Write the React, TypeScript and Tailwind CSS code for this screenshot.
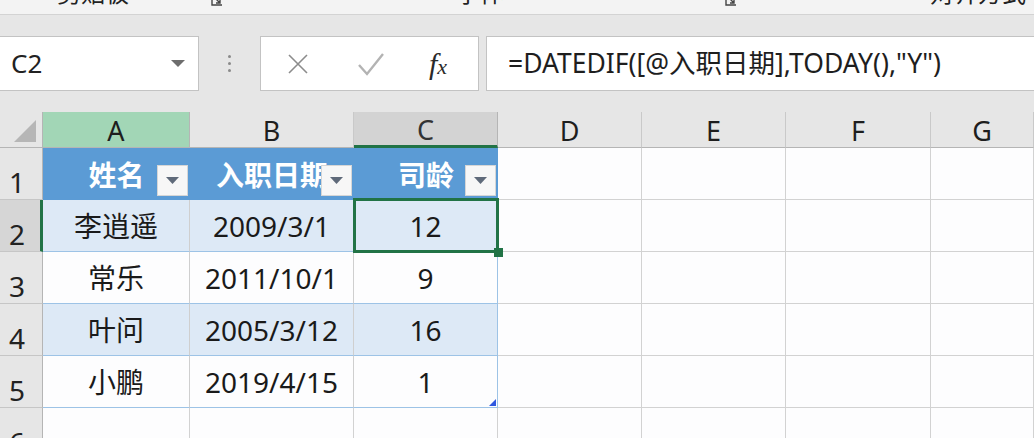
import React from "react";

const font = { fontFamily: '"Noto Sans", "Noto Sans CJK SC", sans-serif' };

const columns = ["A", "B", "C", "D", "E", "F", "G"];

const rows = [
  { name: "李逍遥", date: "2009/3/1", years: "12", band: true },
  { name: "常乐", date: "2011/10/1", years: "9", band: false },
  { name: "叶问", date: "2005/3/12", years: "16", band: true },
  { name: "小鹏", date: "2019/4/15", years: "1", band: false },
];

function Launcher() {
  return (
    <svg width="12" height="12" viewBox="0 0 12 12" className="mt-[-6px]">
      <path d="M1 1v10h10" fill="none" stroke="#444" strokeWidth="1.4" />
      <path d="M4 4l5 5M9 5v4H5" fill="none" stroke="#444" strokeWidth="1.4" />
    </svg>
  );
}

function FilterButton() {
  return (
    <span className="absolute right-[2px] bottom-[3px] grid h-[31px] w-[31px] place-items-center border border-[#d6d6d6] bg-[#f7f7f7]">
      <svg width="13" height="7" viewBox="0 0 13 7">
        <path d="M0 0h13L6.5 7z" fill="#5f6a7a" />
      </svg>
    </span>
  );
}

function ColHeader({ letter }: { letter: string }) {
  const base = "flex items-center justify-center pt-[3px] text-[27px] text-[#1e1e1e]";
  if (letter === "A")
    return <div className={`${base} border-b border-r border-[#b5b5b5] bg-[#a2d6b6]`}>{letter}</div>;
  if (letter === "C")
    return (
      <div className={`${base} border-b-[3px] border-r border-b-[#217346] border-r-[#b5b5b5] bg-[#d3d3d3] text-[#333]`}>
        {letter}
      </div>
    );
  return <div className={`${base} border-b border-r border-b-[#b5b5b5] border-r-[#c9c9c9] bg-[#e6e6e6]`}>{letter}</div>;
}

function RowHeader({ n, selected }: { n: number; selected?: boolean }) {
  return (
    <div
      className={`flex items-end pb-[1px] pl-[9px] text-[28px] leading-none text-[#222] border-b border-[#c6c6c6] ${
        selected ? "border-r-[3px] border-r-[#217346] bg-[#d6d6d6]" : "border-r border-r-[#b5b5b5] bg-[#e6e6e6]"
      }`}
    >
      <span className="pb-[2px]">{n}</span>
    </div>
  );
}

function Empty() {
  return <div className="border-b border-r border-[#d2d2d2] bg-[#fdfdfe]" />;
}

export default function App() {
  return (
    <div style={font} className="h-[438px] w-[1034px] overflow-hidden bg-[#e6e6e6]">
      {/* ribbon group labels, cut off at the top */}
      <div className="relative flex h-[15px] items-start overflow-hidden border-b border-[#d3d3d3] bg-[#f3f3f3] text-[24px] leading-none text-[#222]">
        <span className="ml-[57px] mt-[-19px]">剪贴板</span>
        <span className="ml-[82px]"><Launcher /></span>
        <span className="ml-[233px] mt-[-19px]">字体</span>
        <span className="ml-[221px]"><Launcher /></span>
        <span className="ml-[193px] mt-[-19px]">对齐方式</span>
      </div>

      {/* formula bar */}
      <div className="flex h-[97px] items-start pt-[21px]">
        <div className="ml-[-1px] flex h-[55px] w-[200px] items-center justify-between border border-[#c3c3c3] bg-white pl-[11px] pr-[13px]">
          <span className="text-[26px] text-[#222]">C2</span>
          <svg width="14" height="7" viewBox="0 0 14 7">
            <path d="M0 0h14L7 7z" fill="#6d6d6d" />
          </svg>
        </div>
        <div className="flex h-[55px] w-[61px] flex-col items-center justify-center gap-[4px]">
          <span className="h-[3px] w-[3px] rounded-full bg-[#8a8a8a]" />
          <span className="h-[3px] w-[3px] rounded-full bg-[#8a8a8a]" />
          <span className="h-[3px] w-[3px] rounded-full bg-[#8a8a8a]" />
        </div>
        <div className="flex h-[55px] w-[219px] items-center border border-[#c3c3c3] bg-white">
          <svg width="22" height="20" viewBox="0 0 22 20" className="ml-[26px]">
            <path d="M2 1l18 18M20 1L2 19" stroke="#8c8c8c" strokeWidth="1.6" />
          </svg>
          <svg width="28" height="24" viewBox="0 0 28 24" className="ml-[48px]">
            <path d="M2 13l8 9L26 2" fill="none" stroke="#b3b3b3" strokeWidth="2.4" />
          </svg>
          <span
            className="ml-[44px] text-[30px] italic leading-none text-[#2a2a2a]"
            style={{ fontFamily: '"Liberation Serif", serif' }}
          >
            f<span className="text-[22px]">x</span>
          </span>
        </div>
        <div className="ml-[7px] flex h-[55px] flex-1 items-center border border-r-0 border-[#c3c3c3] bg-white pl-[21px] text-[26.5px] text-[#1e1e1e]">
          =DATEDIF([@入职日期],TODAY(),"Y")
        </div>
      </div>

      {/* sheet */}
      <div className="grid grid-cols-[43px_147px_164px_144px_144px_144px_145px_1fr] grid-rows-[36px_52px_52px_52px_52px_52px_52px] bg-[#fdfdfe]">
        <div className="flex items-end justify-end border-b border-r border-[#b5b5b5] bg-[#e6e6e6] pb-[5px] pr-[6px]">
          <svg width="22" height="22" viewBox="0 0 22 22">
            <path d="M22 0v22H0z" fill="#b6b6b6" />
          </svg>
        </div>
        {columns.map((c) => (
          <ColHeader key={c} letter={c} />
        ))}

        <RowHeader n={1} />
        {["姓名", "入职日期", "司龄"].map((h) => (
          <div
            key={h}
            className="relative flex items-center justify-center overflow-hidden border-b border-[#5b9bd5] bg-[#5b9bd5] pt-[2px] text-[28px] font-bold text-white"
          >
            <span className="whitespace-nowrap">{h}</span>
            <FilterButton />
          </div>
        ))}
        <Empty />
        <Empty />
        <Empty />
        <Empty />

        {rows.map((r, i) => {
          const bg = r.band ? "bg-[#dde9f6]" : "bg-[#fdfdfe]";
          const cell = `flex items-center justify-center text-[28px] text-[#1a1a1a] border-b border-b-[#9dc3e6] ${bg}`;
          return (
            <React.Fragment key={r.name}>
              <RowHeader n={i + 2} selected={i === 0} />
              <div className={`${cell} border-r border-r-[#cfcfcf]`}>{r.name}</div>
              <div className={`${cell} border-r border-r-[#cfcfcf]`}>{r.date}</div>
              <div className={`${cell} relative border-r border-r-[#9dc3e6]`}>
                {r.years}
                {i === 0 && (
                  <>
                    <span className="absolute -top-[2px] left-[-1px] right-[-2px] bottom-[-2px] z-10 border-[3px] border-[#217346]" />
                    <span className="absolute bottom-[-6px] right-[-6px] z-20 h-[9px] w-[9px] bg-[#217346]" />
                  </>
                )}
                {i === 3 && (
                  <svg width="7" height="7" viewBox="0 0 7 7" className="absolute bottom-[1px] right-[1px]">
                    <path d="M7 0v7H0z" fill="#2f57e0" />
                  </svg>
                )}
              </div>
              <Empty />
              <Empty />
              <Empty />
              <Empty />
            </React.Fragment>
          );
        })}

        <RowHeader n={6} />
        <Empty />
        <Empty />
        <Empty />
        <Empty />
        <Empty />
        <Empty />
        <Empty />
      </div>
    </div>
  );
}
